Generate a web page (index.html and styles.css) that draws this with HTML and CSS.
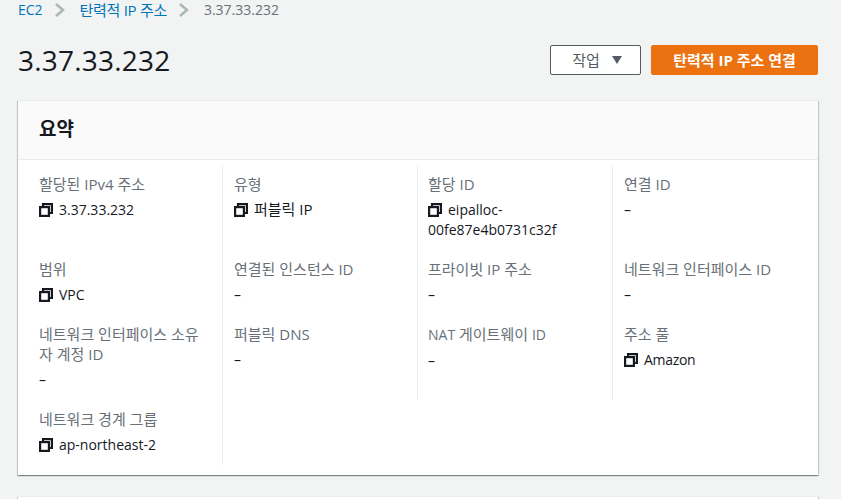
FILE: index.html
```html
<!DOCTYPE html>
<html lang="ko">
<head>
<meta charset="utf-8">
<title>3.37.33.232</title>
<link rel="stylesheet" href="styles.css">
</head>
<body>
<svg class="defs" width="0" height="0"><symbol id="copy" viewBox="0 0 14 14"><path d="M4 3.500V1.100h8.900v8.900H10.500" fill="none" stroke="currentColor" stroke-width="2.200"/><rect x="1.100" y="4.100" width="8.800" height="8.800" fill="none" stroke="currentColor" stroke-width="2.200"/></symbol></svg>
<nav class="crumbs">
  <a class="en">EC2</a>
  <svg class="chev" viewBox="0 0 12 16"><path d="M2 2l7 6-7 6" fill="none" stroke="#aab7b8" stroke-width="2.500"/></svg>
  <a class="mid">탄력적 IP 주소</a>
  <svg class="chev" viewBox="0 0 12 16"><path d="M2 2l7 6-7 6" fill="none" stroke="#aab7b8" stroke-width="2.500"/></svg>
  <span class="en">3.37.33.232</span>
</nav>
<header class="head">
  <h1>3.37.33.232</h1>
  <div class="actions">
    <button class="btn">작업<i class="tri"></i></button>
    <button class="btn primary">탄력적 IP 주소 연결</button>
  </div>
</header>
<section class="card">
  <h2>요약</h2>
  <div class="grid">
    <div class="cell"><div class="k">할당된 IPv4 주소</div><div class="v"><svg class="ic"><use href="#copy"/></svg>3.37.33.232</div></div>
    <div class="cell"><div class="k">유형</div><div class="v"><svg class="ic"><use href="#copy"/></svg><span class="ko">퍼블릭 IP</span></div></div>
    <div class="cell"><div class="k">할당 ID</div><div class="v"><svg class="ic"><use href="#copy"/></svg>eipalloc-<br>00fe87e4b0731c32f</div></div>
    <div class="cell"><div class="k">연결 ID</div><div class="v">–</div></div>
    <div class="cell"><div class="k">범위</div><div class="v"><svg class="ic"><use href="#copy"/></svg>VPC</div></div>
    <div class="cell"><div class="k">연결된 인스턴스 ID</div><div class="v">–</div></div>
    <div class="cell"><div class="k">프라이빗 IP 주소</div><div class="v">–</div></div>
    <div class="cell"><div class="k">네트워크 인터페이스 ID</div><div class="v">–</div></div>
    <div class="cell"><div class="k">네트워크 인터페이스 소유자 계정 ID</div><div class="v">–</div></div>
    <div class="cell"><div class="k">퍼블릭 DNS</div><div class="v">–</div></div>
    <div class="cell"><div class="k"><span class="en">NAT</span> 게이트웨이 <span class="en">ID</span></div><div class="v">–</div></div>
    <div class="cell"><div class="k">주소 풀</div><div class="v"><svg class="ic"><use href="#copy"/></svg><span class="nar">Amazon</span></div></div>
    <div class="cell"><div class="k">네트워크 경계 그룹</div><div class="v"><svg class="ic"><use href="#copy"/></svg>ap-northeast-2</div></div>
  </div>
</section>
<section class="card next"></section>
</body>
</html>
```
FILE: styles.css
```css
* { box-sizing: border-box; }
html, body { height: 100%; }
body {
  margin: 0;
  padding: 0 23px 0 18px;
  background: #f2f3f3;
  color: #16191f;
  font: 14px/20px "Open Sans", "Noto Sans CJK KR", sans-serif;
  overflow: hidden;
}
.defs { position: absolute; }
.crumbs {
  display: flex;
  align-items: center;
  height: 20px;
  color: #687078;
  font-size: 15px;
  white-space: nowrap;
}
.crumbs a { color: #0073bb; }
.crumbs .en { font-size: 14px; }
.crumbs .mid { letter-spacing: -.3px; }
.chev { width: 12px; height: 16px; margin: 0 14px 0 11px; }
.head {
  display: flex;
  justify-content: space-between;
  align-items: center;
  height: 32px;
  margin-top: 24px;
}
h1 { margin: 0; font-size: 28px; line-height: 36px; font-weight: 400; letter-spacing: .2px; }
.actions { display: flex; gap: 10px; }
.btn {
  display: flex;
  align-items: center;
  justify-content: center;
  height: 30px;
  width: 91px;
  border: 1px solid #545b64;
  border-radius: 2px;
  background: #fff;
  color: #545b64;
  font: inherit;
  font-size: 15px;
  padding: 0 0 0 3px;
}
.tri {
  width: 0;
  height: 0;
  margin-left: 12px;
  border: 5px solid transparent;
  border-top: 8px solid #545b64;
  border-bottom: 0;
}
.primary {
  width: 167px;
  background: #ec7211;
  border-color: #ec7211;
  color: #fff;
  font-weight: 700;
  padding: 0;
}
.card {
  height: 375px;
  margin-top: 24px;
  background: #fff;
  box-shadow: 0 1px 1px 0 rgba(0, 28, 36, .3), 1px 1px 1px 0 rgba(0, 28, 36, .15), -1px 1px 1px 0 rgba(0, 28, 36, .15);
  border-top: 1px solid #eaeded;
}
.next { margin-top: 21px; height: 20px; }
h2 {
  margin: 0;
  height: 59px;
  padding: 0 21px;
  background: #fafafa;
  border-bottom: 1px solid #eaeded;
  font-size: 19px;
  line-height: 57px;
  font-weight: 700;
}
.grid {
  display: grid;
  grid-template-columns: 205px 195px 195px 1fr;
  margin-top: 5px;
}
.cell {
  height: 65px;
  padding: 9px 15px 0 11px;
  border-right: 1px solid #eaeded;
}
.cell:nth-child(4n+1) { padding-left: 21px; }
.cell:nth-child(4n+3) { padding-left: 10px; }
.cell:nth-child(4n) { border-right: 0; }
.cell:nth-child(-n+4), .cell:nth-child(n+9):nth-child(-n+12) { height: 85px; }
.k { color: #687078; font-size: 15px; margin-bottom: 6px; word-break: break-all; }
.k .en { font-size: 14px; }
.v { line-height: 20px; }
.ko { font-size: 15px; line-height: 18px; }
.en { font-size: 14px; }
.nar { letter-spacing: -.3px; }
.ic { width: 14px; height: 14px; margin-right: 6px; vertical-align: -2px; }
```
